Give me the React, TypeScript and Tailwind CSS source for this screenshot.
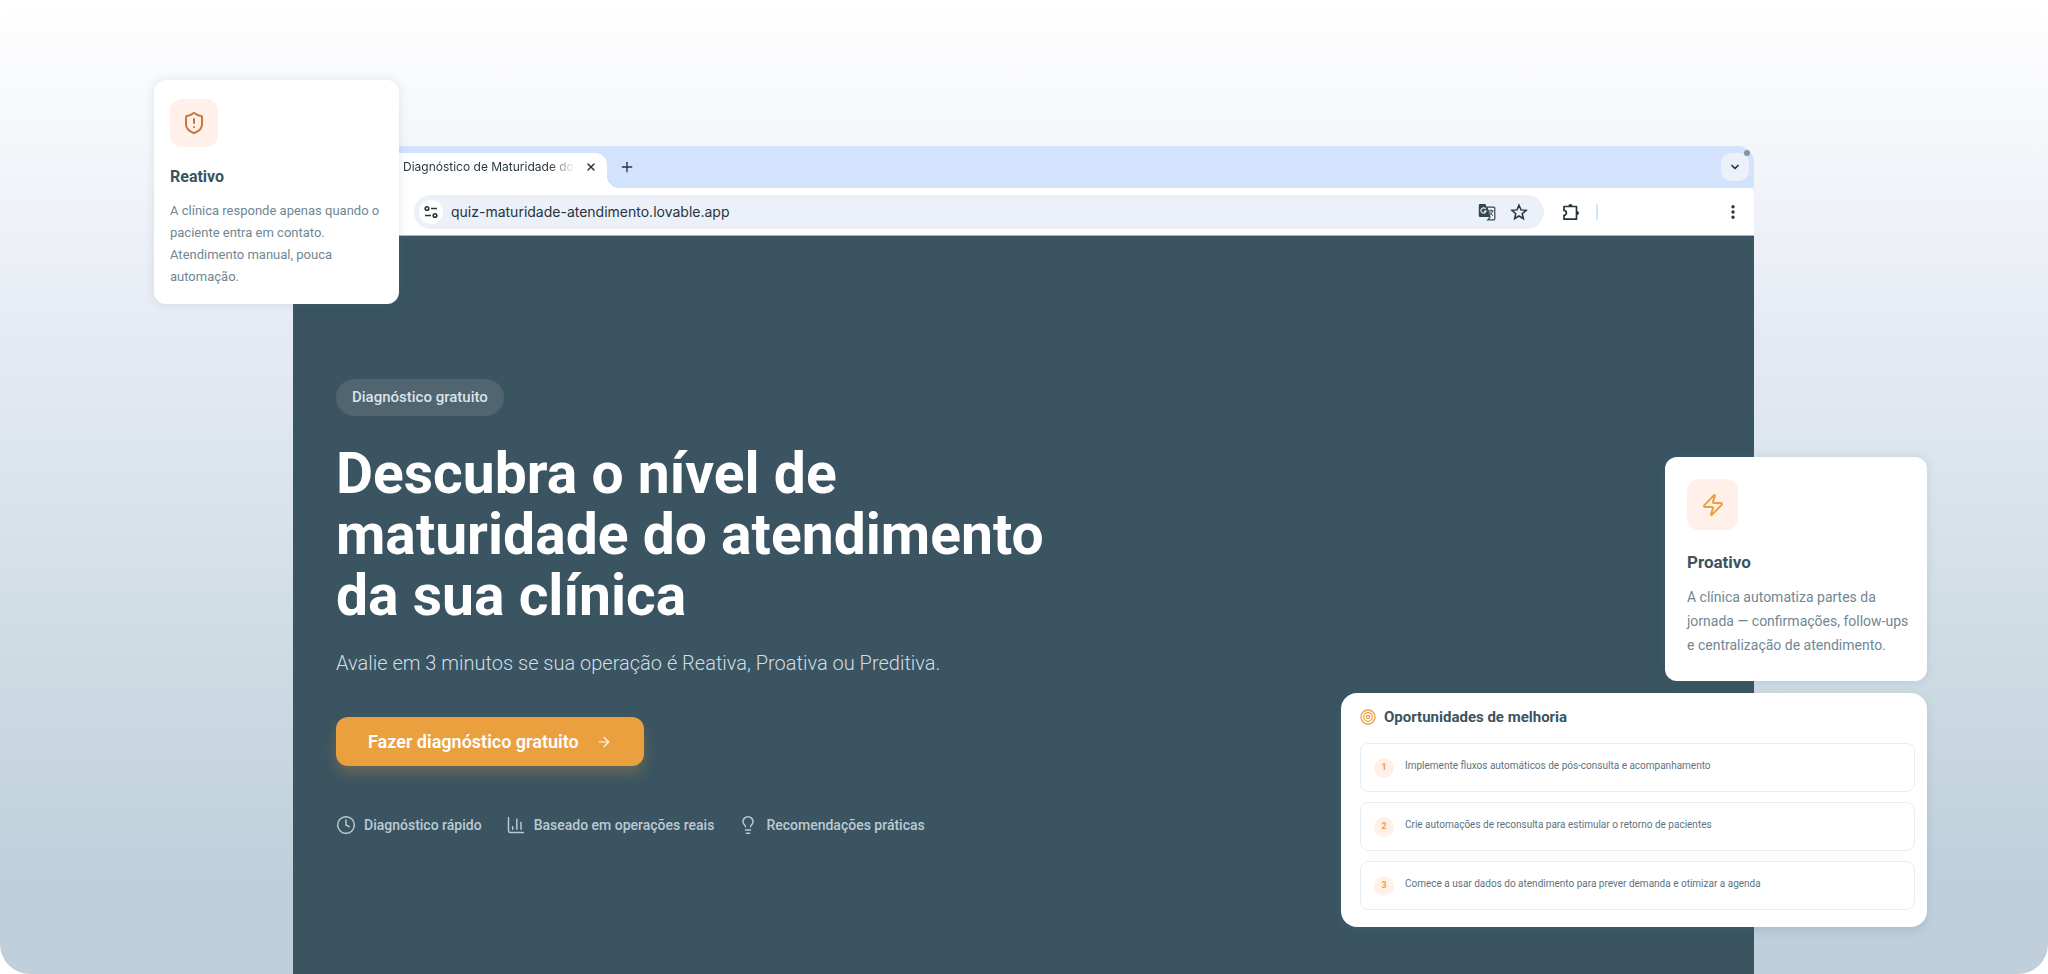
import {
  ArrowRight,
  ChartColumn,
  ChevronDown,
  Clock,
  EllipsisVertical,
  Lightbulb,
  Plus,
  ShieldAlert,
  X,
  Zap,
} from 'lucide-react';

const features = [
  { label: 'Diagnóstico rápido', icon: Clock },
  { label: 'Baseado em operações reais', icon: ChartColumn },
  { label: 'Recomendações práticas', icon: Lightbulb },
];

const opportunities = [
  'Implemente fluxos automáticos de pós-consulta e acompanhamento',
  'Crie automações de reconsulta para estimular o retorno de pacientes',
  'Comece a usar dados do atendimento para prever demanda e otimizar a agenda',
];

function TuneIcon() {
  return (
    <svg viewBox="0 0 16 16" className="size-4" fill="none" stroke="currentColor" strokeWidth="1.6" aria-hidden="true">
      <circle cx="4" cy="4.5" r="1.8" />
      <path d="M8 4.5h6M2 11.5h6" />
      <circle cx="12" cy="11.5" r="1.8" />
    </svg>
  );
}

function TranslateIcon() {
  return (
    <svg viewBox="0 0 18 18" className="size-[18px]" fill="none" aria-hidden="true">
      <path d="M2 1h5.5l4.5 13H2a1.2 1.2 0 0 1-1.2-1.2V2.2A1.2 1.2 0 0 1 2 1z" fill="#33454f" />
      <path d="M7.6 6A2.6 2.6 0 1 0 8 8.2H5.8" stroke="#ecf0f8" strokeWidth="1.2" />
      <path d="M9 4.2h6.8a1 1 0 0 1 1 1v10.6a1 1 0 0 1-1 1H9.8l2.2-2.6z" fill="#ecf0f8" stroke="#33454f" strokeWidth="1.2" />
      <path d="M10.5 7.8h5M13 6.6v1.2M14.5 7.8c-.4 2-1.600 3.400-3.200 4.400M11.600 8.800c.6 1.400 1.800 2.600 3.400 3.800" stroke="#33454f" />
    </svg>
  );
}

function StarIcon() {
  return (
    <svg viewBox="0 0 18 18" className="size-[18px]" fill="none" stroke="currentColor" strokeWidth="1.5" aria-hidden="true">
      <path d="M9 2.2l2 4.7 5.1.4-3.9 3.4 1.2 5L9 13l-4.4 2.7 1.2-5L1.9 7.3 7 6.9z" />
    </svg>
  );
}

function PuzzleIcon() {
  return (
    <svg viewBox="0 0 18 18" className="size-[18px]" fill="none" stroke="currentColor" strokeWidth="1.7" strokeLinejoin="round" aria-hidden="true">
      <path d="M2 3.5h12.5v12.700H2v-3.900a2.400 2.400 0 0 0 0-4.800z" />
      <path d="M6.400 3a2 2 0 0 1 4 0zM15 7.900a2 2 0 0 1 0 4z" fill="currentColor" stroke="none" />
    </svg>
  );
}

function TargetIcon() {
  return (
    <svg viewBox="0 0 16 16" className="size-4 text-[#eba03f]" fill="none" stroke="currentColor" strokeWidth="1.3" aria-hidden="true">
      <circle cx="8" cy="8" r="7" />
      <circle cx="8" cy="8" r="4.3" />
      <circle cx="8" cy="8" r="1.6" />
    </svg>
  );
}

function BrowserChrome() {
  return (
    <header className="font-[Inter,sans-serif] text-[#26343c]">
      <div className="relative flex h-[42px] items-end justify-between rounded-tr-2xl bg-[#d3e3fd] pr-[5px]">
        <div className="flex h-[35px] items-center">
          <div className="relative flex h-full items-center rounded-tr-xl bg-white pr-2 pb-2 pl-[110px]">
            <span className="w-[172px] overflow-hidden bg-linear-to-r from-[#26343c] from-85% to-transparent bg-clip-text text-xs leading-5 whitespace-nowrap text-transparent">
              Diagnóstico de Maturidade do
            </span>
            <button type="button" aria-label="Fechar aba" className="ml-2 p-0.5">
              <X className="size-3" strokeWidth={3} />
            </button>
            <span className="absolute bottom-0 left-full size-3 bg-[radial-gradient(circle_at_100%_0,#d3e3fd_12px,white_12px)]" />
          </div>
          <button type="button" aria-label="Nova aba" className="ml-3 pb-2">
            <Plus className="size-4" strokeWidth={2} />
          </button>
        </div>
        <button
          type="button"
          aria-label="Pesquisar abas"
          className="mb-[7px] grid size-7 place-items-center rounded-[10px] bg-[#ecf0f8]"
        >
          <ChevronDown className="size-3" strokeWidth={3.5} />
        </button>
        <span className="absolute top-1 right-1 size-1.5 rounded-full bg-[#84979f]" />
      </div>
      <div className="flex h-12 items-center rounded-tr-md border-b border-[#a9b7be] bg-white pr-3 pl-[121px]">
        <div className="flex h-[34px] min-w-0 grow items-center rounded-full bg-[#ecf0f8] pr-4 pl-[5px]">
          <button type="button" aria-label="Informações do site" className="grid size-6 place-items-center rounded-full bg-white">
            <TuneIcon />
          </button>
          <input
            type="text"
            aria-label="Endereço"
            readOnly
            value="quiz-maturidade-atendimento.lovable.app"
            className="ml-2 min-w-0 grow bg-transparent text-sm outline-none"
          />
          <button type="button" aria-label="Traduzir">
            <TranslateIcon />
          </button>
          <button type="button" aria-label="Favoritar" className="ml-3.5">
            <StarIcon />
          </button>
        </div>
        <button type="button" aria-label="Extensões" className="ml-[18px]">
          <PuzzleIcon />
        </button>
        <span className="ml-4 h-4 w-0.5 bg-[#d3e3fd]" />
        <button type="button" aria-label="Menu" className="ml-[126px]">
          <EllipsisVertical className="size-[18px]" strokeWidth={2.5} />
        </button>
      </div>
    </header>
  );
}

function Hero() {
  return (
    <main className="grow bg-[#3a5461] px-[43px] pt-[143px]">
      <span className="inline-block rounded-full bg-[#50656f] px-4 py-2 text-[15px] leading-[21px] font-medium text-[#dbe3e9]">
        Diagnóstico gratuito
      </span>
      <h1 className="mt-[27px] text-[57px] leading-[61px] font-bold text-white">
        Descubra o nível de
        <br />
        maturidade do atendimento
        <br />
        da sua clínica
      </h1>
      <p className="mt-[21px] text-xl leading-8 font-light text-[#d3dde4]">
        Avalie em 3 minutos se sua operação é Reativa, Proativa ou Preditiva.
      </p>
      <button
        type="button"
        className="mt-[38px] flex h-[49px] items-center gap-[17px] rounded-xl bg-[#eba03f] px-8 text-lg font-semibold text-white shadow-[0_8px_14px_rgba(235,160,63,0.25)]"
      >
        Fazer diagnóstico gratuito
        <ArrowRight className="size-4" strokeWidth={1.75} />
      </button>
      <ul className="mt-[49px] flex flex-wrap gap-6 text-sm leading-5 font-medium text-[#bccad3]">
        {features.map(({ label, icon: Icon }) => (
          <li key={label} className="flex items-center gap-2">
            <Icon className="size-5" strokeWidth={1.75} />
            {label}
          </li>
        ))}
      </ul>
    </main>
  );
}

export default function App() {
  return (
    <div className="relative flex min-h-screen flex-col overflow-hidden rounded-[30px] bg-[linear-gradient(to_bottom,#ffffff,#e9edf5_30%,#d2dee5_62%,#bfd0dc_90%)] font-[Roboto,sans-serif]">
      <div className="mr-[294px] ml-[293px] flex grow flex-col pt-[146px]">
        <BrowserChrome />
        <Hero />
      </div>

      <article className="absolute top-20 left-[154px] w-[245px] rounded-xl bg-white px-4 pt-[19px] pb-4 shadow-[0_0_10px_rgba(70,110,150,0.16)]">
        <span className="grid size-12 place-items-center rounded-xl bg-[#fff0ea]">
          <ShieldAlert className="size-6 text-[#c8743c]" />
        </span>
        <h2 className="mt-[18px] text-base leading-6 font-bold text-[#3a5461]">Reativo</h2>
        <p className="mt-[11px] text-[13px] leading-[22px] text-[#6f8794]">
          A clínica responde apenas quando o paciente entra em contato. Atendimento manual, pouca automação.
        </p>
      </article>

      <article className="absolute top-[457px] right-[121px] w-[262px] rounded-xl bg-white pt-[22px] pr-3 pb-6 pl-[22px] shadow-[0_0_10px_rgba(70,110,150,0.16)]">
        <span className="grid size-[51px] place-items-center rounded-xl bg-[#fff0ea]">
          <Zap className="size-6 text-[#eba03f]" />
        </span>
        <h2 className="mt-5 text-[17px] leading-6 font-bold text-[#3a5461]">Proativo</h2>
        <p className="mt-[11px] text-sm leading-6 text-[#6f8794]">
          A clínica automatiza partes da jornada — confirmações, follow-ups e centralização de atendimento.
        </p>
      </article>

      <section className="absolute top-[693px] right-[121px] w-[586px] rounded-2xl bg-white pt-3 pr-3 pb-[17px] pl-[19px] shadow-[0_4px_10px_rgba(70,110,150,0.18)]">
        <h2 className="flex items-center gap-2 text-[15px] leading-6 font-bold text-[#3a5461]">
          <TargetIcon />
          Oportunidades de melhoria
        </h2>
        <ol className="mt-3.5 flex flex-col gap-2.5">
          {opportunities.map((text, i) => (
            <li key={text} className="flex h-[49px] items-center gap-[11px] rounded-lg border border-[#e6eef6] px-[13px]">
              <span className="grid size-5 place-items-center rounded-full bg-[#fff0ea] text-[9px] font-bold text-[#eba03f]">
                {i + 1}
              </span>
              <span className="pb-1 text-[10px] leading-4 text-[#5b7381]">{text}</span>
            </li>
          ))}
        </ol>
      </section>
    </div>
  );
}
